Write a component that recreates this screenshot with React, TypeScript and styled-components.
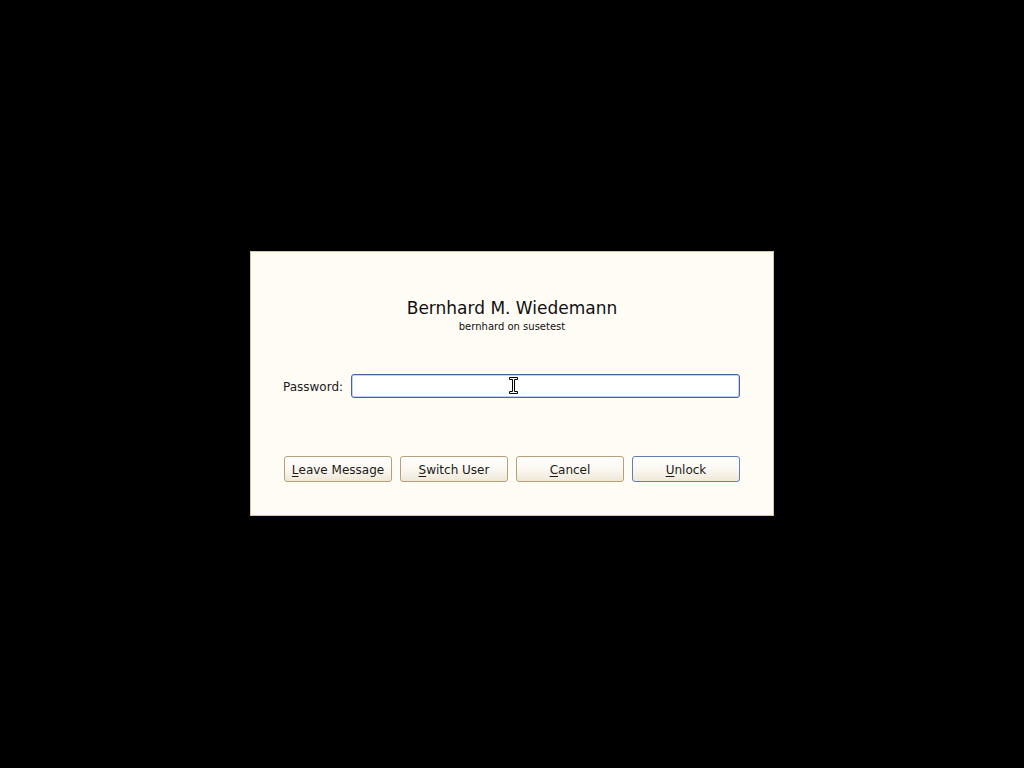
import React from "react";
import styled, { createGlobalStyle } from "styled-components";

const Global = createGlobalStyle`
  html, body { margin: 0; padding: 0; background: #000; }
  body { font-family: "DejaVu Sans", "Liberation Sans", sans-serif; }
`;

const Screen = styled.div`
  width: 1024px;
  height: 768px;
  background: #000;
  display: flex;
  justify-content: center;
  align-items: flex-start;
  padding-top: 251px;
  box-sizing: border-box;
`;

const Dialog = styled.div`
  width: 524px;
  height: 265px;
  box-sizing: border-box;
  background: #fffcf6;
  border: 1px solid #d4c69e;
  padding: 46px 33px 0 33px;
  display: flex;
  flex-direction: column;
  position: relative;
`;

const Title = styled.div`
  font-size: 17px;
  line-height: 20px;
  color: #101010;
  text-align: center;
`;

const Subtitle = styled.div`
  font-size: 10px;
  line-height: 12px;
  margin-top: 3px;
  color: #101010;
  text-align: center;
`;

const Row = styled.div`
  display: flex;
  align-items: center;
  margin-top: 41px;
  margin-left: -1px;
`;

const Label = styled.label`
  font-size: 12px;
  color: #1a1a1a;
  width: 68px;
  flex: none;
  padding-top: 2px;
`;

const InputWrap = styled.div`
  flex: 1;
  position: relative;
  height: 24px;
  box-sizing: border-box;
  border: 1px solid #3f66a3;
  border-radius: 3px;
  background: #fff;
  box-shadow: inset 0 0 0 1px #c5d3ea;
`;

const Buttons = styled.div`
  display: flex;
  gap: 8px;
  margin-top: 58px;
`;

const Button = styled.button<{ $default?: boolean }>`
  width: 108px;
  height: 26px;
  box-sizing: border-box;
  border: 1px solid ${(p) => (p.$default ? "#5f80b3" : "#b5a27a")};
  border-radius: 3px;
  background: linear-gradient(#ffffff 0%, #fbf8f2 50%, #efe8d8 100%);
  font-family: "DejaVu Sans", "Liberation Sans", sans-serif;
  font-size: 12px;
  color: #1a1a1a;
  padding: 2px 0 0 0;
  display: flex;
  align-items: center;
  justify-content: center;
`;

const Mn = styled.span`
  text-decoration: underline;
  text-underline-offset: 2px;
`;

const Cursor = styled.svg`
  position: absolute;
  left: 157px;
  top: 2px;
`;

export default function App() {
  return (
    <>
      <Global />
      <Screen>
        <Dialog>
          <Title>Bernhard M. Wiedemann</Title>
          <Subtitle>bernhard on susetest</Subtitle>
          <Row>
            <Label>Password:</Label>
            <InputWrap>
              <Cursor width="9" height="17" viewBox="0 0 9 17">
                <path
                  d="M0.5 0.5 H8.5 V2.5 H5.5 V14.5 H8.5 V16.5 H0.5 V14.5 H3.5 V2.5 H0.5 Z"
                  fill="#fff"
                  stroke="#000"
                  strokeWidth="1"
                />
              </Cursor>
            </InputWrap>
          </Row>
          <Buttons>
            <Button><Mn>L</Mn>eave Message</Button>
            <Button><Mn>S</Mn>witch User</Button>
            <Button><Mn>C</Mn>ancel</Button>
            <Button $default><Mn>U</Mn>nlock</Button>
          </Buttons>
        </Dialog>
      </Screen>
    </>
  );
}
